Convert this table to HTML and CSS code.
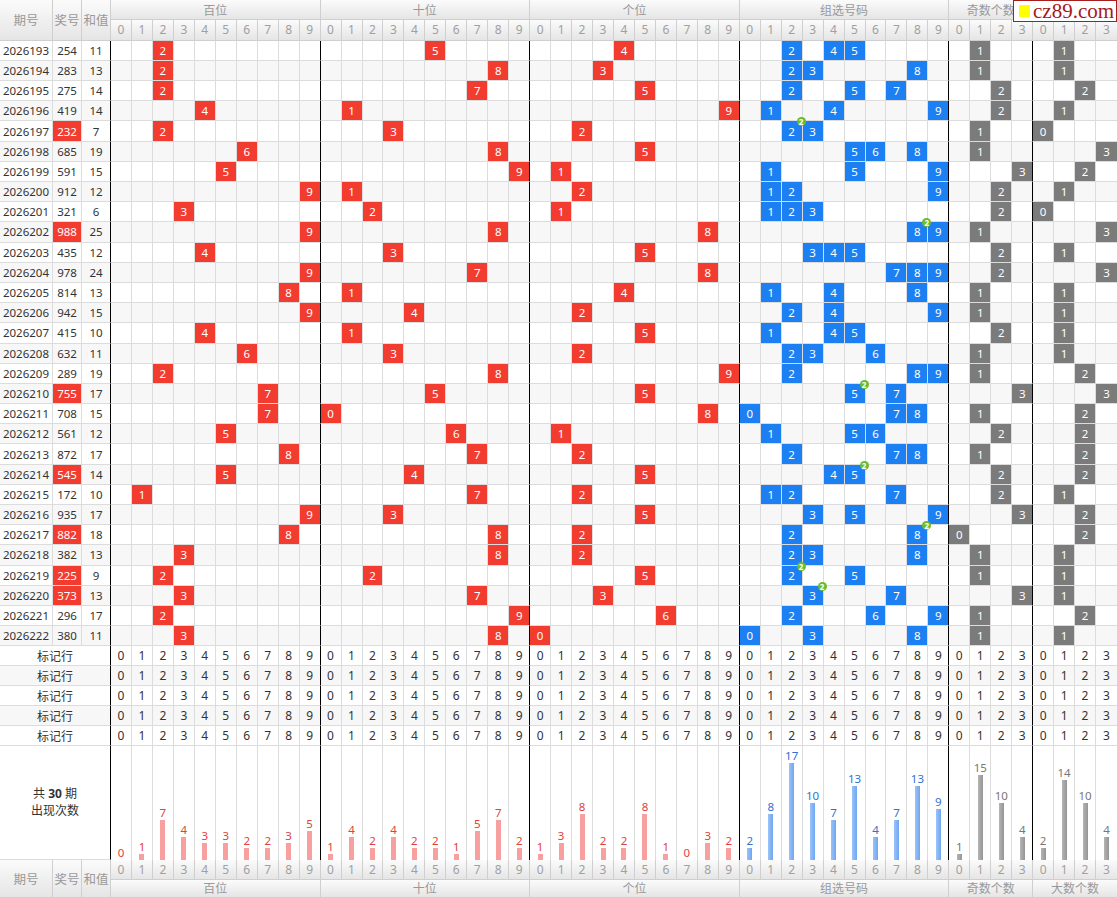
FILE: index.html
```html
<!DOCTYPE html>
<html lang="zh-CN">
<head>
<meta charset="utf-8">
<title>走势图</title>
<link rel="stylesheet" href="styles.css">
</head>
<body>
<div class="page">
  <div class="grid" id="grid"></div>
  <div class="logo"><span class="logo-sq"></span><span class="logo-txt">cz89.com</span></div>
</div>
<script src="script.js"></script>
</body>
</html>
```
FILE: styles.css
```css
html, body { margin: 0; padding: 0; background: #fff; }
.page { position: relative; width: 1117px; height: 898px; overflow: hidden; }
.grid {
  display: grid;
  width: 1117px;
  grid-template-columns: 53px 29px 29px repeat(48, minmax(0, 1fr));
  grid-template-rows: 20px 20.7px repeat(30, 20.2px) repeat(5, 20px) 113.3px 20px 18px;
  font-family: "Noto Sans", "Noto Sans CJK SC", sans-serif;
  font-size: 11.5px;
  color: #333;
}
.c {
  box-sizing: border-box;
  border-right: 1px solid #dcdcdc;
  border-bottom: 1px solid #dcdcdc;
  display: flex;
  align-items: center;
  justify-content: center;
  min-width: 0;
  white-space: nowrap;
  position: relative;
}
.r2 { grid-row: span 2; }
.s3 { grid-column: span 3; }
.s4 { grid-column: span 4; }
.s10 { grid-column: span 10; }
.h {
  background: linear-gradient(#fbfbfb, #e5e5e5);
  color: #999;
  border-color: #cfcfcf;
  font-size: 12px;
}
.hd { color: #a0a0a0; font-size: 12px; }
.hl { font-size: 12.5px; }
.alt { background: #f7f7f7; }
.sep { border-right-color: #000; }
.last { border-right: none; }
.red { background: #f23c30; color: #fff; }
.blue { background: #1c80f2; color: #fff; }
.gray { background: #7b7b7b; color: #fff; }
.badge {
  position: absolute;
  top: -4px;
  right: -4px;
  width: 9px;
  height: 9px;
  border-radius: 50%;
  background: #6cbb2b;
  color: #fff;
  font-size: 8px;
  line-height: 9px;
  text-align: center;
  font-weight: bold;
  z-index: 3;
}
.mk { font-size: 12px; }
.chartl { flex-direction: column; line-height: 17px; font-size: 12px; }
.chartl b { font-weight: bold; }
.bc { flex-direction: column; justify-content: flex-end; align-items: center; border-bottom: none; }
.bl { font-size: 11.5px; line-height: 14px; }
.bar { width: 5px; }
.pr .bl { color: #e0413b; }
.pr .bar { background: #f8a0a0; }
.pb .bl { color: #2e72d2; }
.pb .bar { background: linear-gradient(90deg, #9cc3f8, #6ea6f2); }
.pg .bl { color: #777; }
.pg .bar { background: linear-gradient(90deg, #b5b5b5, #959595); }
.logo {
  position: absolute;
  top: 0;
  left: 1013px;
  width: 104px;
  height: 22px;
  box-sizing: border-box;
  border: 1px solid #a51d1d;
  background: #fff;
  display: flex;
  align-items: center;
  padding-left: 5px;
}
.logo-sq { width: 11px; height: 12px; background: #ffff00; margin-right: 3px; flex: none; }
.logo-txt { font-family: "Liberation Serif", serif; font-size: 21px; line-height: 20px; color: #a8181c; }
```
FILE: script.js
```js
(function () {
  var data = [
    ["2026193","254"],["2026194","283"],["2026195","275"],["2026196","419"],["2026197","232"],
    ["2026198","685"],["2026199","591"],["2026200","912"],["2026201","321"],["2026202","988"],
    ["2026203","435"],["2026204","978"],["2026205","814"],["2026206","942"],["2026207","415"],
    ["2026208","632"],["2026209","289"],["2026210","755"],["2026211","708"],["2026212","561"],
    ["2026213","872"],["2026214","545"],["2026215","172"],["2026216","935"],["2026217","882"],
    ["2026218","382"],["2026219","225"],["2026220","373"],["2026221","296"],["2026222","380"]
  ];
  var groups = [["百位",10],["十位",10],["个位",10],["组选号码",10],["奇数个数",4],["大数个数",4]];
  var grid = document.getElementById("grid");

  function add(text, cls) {
    var d = document.createElement("div");
    d.className = "c " + (cls || "");
    if (text !== null && text !== undefined && text !== "") d.textContent = text;
    grid.appendChild(d);
    return d;
  }

  var counts = [[],[],[],[],[],[]];
  for (var g = 0; g < 6; g++) for (var k = 0; k < groups[g][1]; k++) counts[g][k] = 0;

  // header
  add("期号", "h hl r2"); add("奖号", "h hl r2"); add("和值", "h hl r2");
  groups.forEach(function (gr, gi) { add(gr[0], "h s" + gr[1] + (gi === 5 ? " last" : "")); });
  groups.forEach(function (gr, gi) {
    for (var i = 0; i < gr[1]; i++) add(String(i), "h hd" + (gi === 5 && i === 3 ? " last" : ""));
  });

  // data rows
  data.forEach(function (row, idx) {
    var alt = idx % 2 ? " alt" : "";
    var ds = row[1].split("").map(Number);
    var sum = ds[0] + ds[1] + ds[2];
    var freq = {};
    ds.forEach(function (x) { freq[x] = (freq[x] || 0) + 1; });
    var pair = Object.keys(freq).length < 3;
    add(row[0], alt);
    add(row[1], pair ? "red" : alt);
    add(String(sum), "sep" + alt);
    for (var p = 0; p < 3; p++) {
      for (var i = 0; i < 10; i++) {
        var hit = ds[p] === i;
        if (hit) counts[p][i]++;
        add(hit ? String(i) : "", (i === 9 ? "sep " : "") + (hit ? "red" : alt));
      }
    }
    for (var j = 0; j < 10; j++) {
      var f = freq[j] || 0;
      counts[3][j] += f;
      var c = add(f ? String(j) : "", (j === 9 ? "sep " : "") + (f ? "blue" : alt));
      if (f > 1) {
        var b = document.createElement("span");
        b.className = "badge";
        b.textContent = String(f);
        c.appendChild(b);
      }
    }
    var odd = ds.filter(function (x) { return x % 2 === 1; }).length;
    var big = ds.filter(function (x) { return x >= 5; }).length;
    counts[4][odd]++; counts[5][big]++;
    for (var o = 0; o < 4; o++) add(o === odd ? String(o) : "", (o === 3 ? "sep " : "") + (o === odd ? "gray" : alt));
    for (var q = 0; q < 4; q++) add(q === big ? String(q) : "", (q === 3 ? "last " : "") + (q === big ? "gray" : alt));
  });

  // marker rows
  for (var m = 0; m < 5; m++) {
    var alt2 = m % 2 ? " alt" : "";
    add("标记行", "mk s3 sep" + alt2);
    groups.forEach(function (gr, gi) {
      for (var i = 0; i < gr[1]; i++) {
        var cls = "mk" + alt2;
        if (i === gr[1] - 1) cls += gi === 5 ? " last" : " sep";
        add(String(i), cls);
      }
    });
  }

  // chart row
  var lab = add("", "chartl s3 sep");
  lab.innerHTML = "<span>共 <b>30</b> 期</span><span>出现次数</span>";
  groups.forEach(function (gr, gi) {
    var pc = gi < 3 ? "pr" : (gi === 3 ? "pb" : "pg");
    for (var i = 0; i < gr[1]; i++) {
      var cls = "bc " + pc;
      if (i === gr[1] - 1) cls += gi === 5 ? " last" : " sep";
      var cell = add("", cls);
      var n = counts[gi][i];
      var l = document.createElement("span");
      l.className = "bl";
      l.textContent = String(n);
      var bar = document.createElement("span");
      bar.className = "bar";
      bar.style.height = (n * 5.67).toFixed(2) + "px";
      cell.appendChild(l);
      cell.appendChild(bar);
    }
  });

  // footer
  add("期号", "h hl r2"); add("奖号", "h hl r2"); add("和值", "h hl r2");
  groups.forEach(function (gr, gi) {
    for (var i = 0; i < gr[1]; i++) add(String(i), "h hd" + (gi === 5 && i === 3 ? " last" : ""));
  });
  groups.forEach(function (gr, gi) { add(gr[0], "h s" + gr[1] + (gi === 5 ? " last" : "")); });
})();
```
